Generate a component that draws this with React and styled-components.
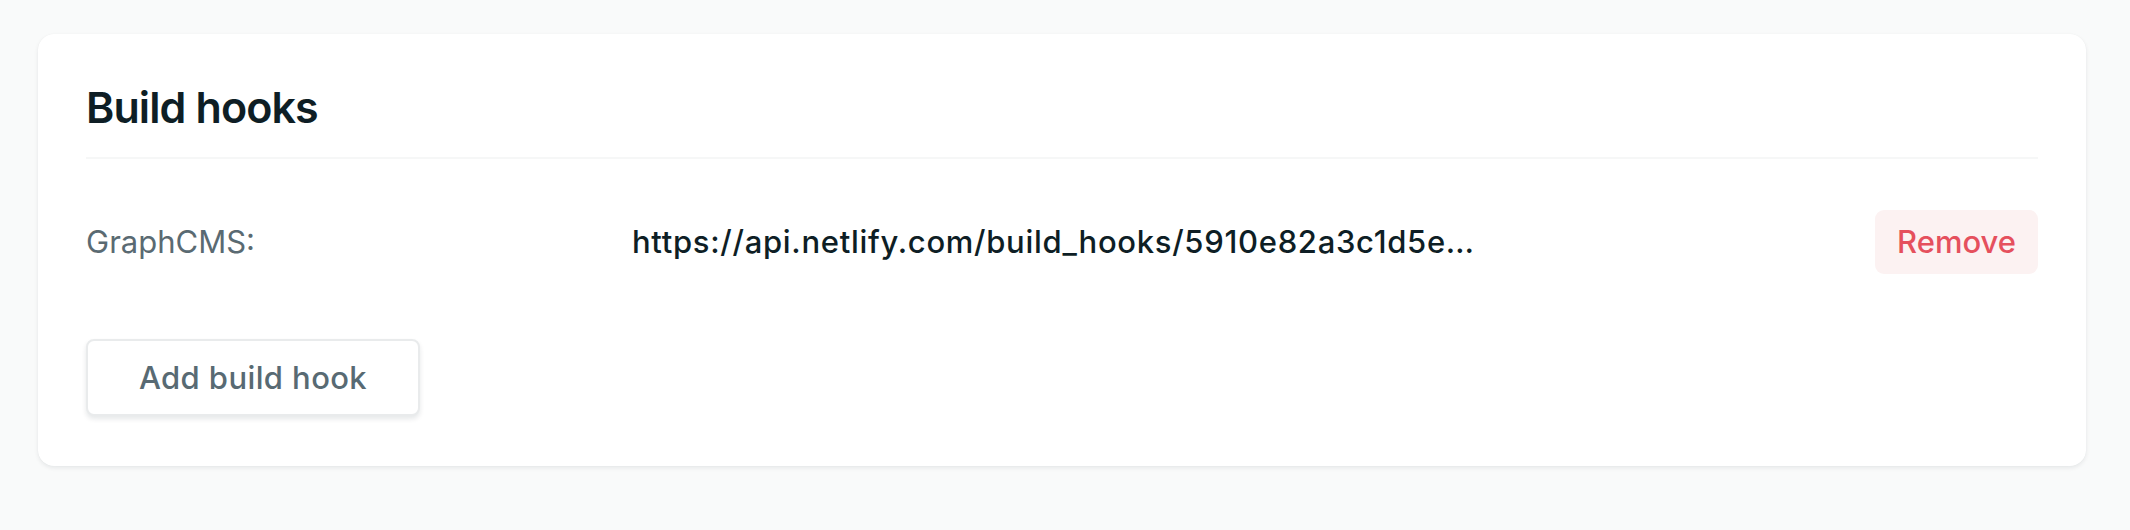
import React from "react";
import styled, { createGlobalStyle } from "styled-components";

const GlobalStyle = createGlobalStyle`
  html, body {
    margin: 0;
    padding: 0;
    background: #f9fafa;
    font-family: Inter, "Noto Sans", "Liberation Sans", sans-serif;
    -webkit-font-smoothing: antialiased;
  }
  * { box-sizing: border-box; }
`;

const Page = styled.div`
  padding: 34px 44px 64px 38px;
`;

const Card = styled.section`
  background: #ffffff;
  border-radius: 16px;
  box-shadow: 0 2px 4px rgba(14, 30, 37, 0.08), 0 0 1px rgba(14, 30, 37, 0.06);
  padding: 48px 48px 50px;
  min-height: 432px;
`;

const Header = styled.header`
  padding-bottom: 23px;
  border-bottom: 2px solid #f6f7f7;
`;

const Title = styled.h2`
  margin: 0;
  font-size: 43px;
  line-height: 1.2;
  font-weight: 600;
  color: #0e1e25;
  letter-spacing: -0.9px;
`;

const HookRow = styled.div`
  display: grid;
  grid-template-columns: 546px minmax(0, ${(p) => p.$urlWidth}px) 1fr auto;
  align-items: center;
  margin-top: 51px;
`;

const Label = styled.span`
  font-size: 31px;
  line-height: 1.2;
  color: #5a6a72;
  font-weight: 400;
`;

const Url = styled.span`
  font-size: 31px;
  line-height: 1.2;
  color: #0e1e25;
  font-weight: 500;
  letter-spacing: 0.7px;
  white-space: nowrap;
`;

const RemoveButton = styled.button`
  grid-column: 4;
  justify-self: end;
  height: 64px;
  padding: 0 22px;
  border: none;
  border-radius: 9px;
  background: #fcf2f2;
  color: #e5505d;
  font-family: inherit;
  font-size: 31px;
  font-weight: 500;
  cursor: pointer;
`;

const AddButton = styled.button`
  margin-top: 65px;
  height: 77px;
  padding: 0 40px;
  width: 334px;
  background: #ffffff;
  border: 2px solid #e9ebec;
  border-radius: 8px;
  box-shadow: 0 3px 5px rgba(14, 30, 37, 0.1);
  color: #586a73;
  font-family: inherit;
  font-size: 31px;
  font-weight: 500;
  letter-spacing: 0.4px;
  cursor: pointer;
`;

const hooks = [
  {
    name: "GraphCMS:",
    url: "https://api.netlify.com/build_hooks/5910e82a3c1d5e0e5f27c1a4",
  },
];

const truncate = (s, n) => (s.length > n ? s.slice(0, n) + "…" : s);

export default function App() {
  return (
    <>
      <GlobalStyle />
      <Page>
        <Card>
          <Header>
            <Title>Build hooks</Title>
          </Header>
          {hooks.map((h) => (
            <HookRow key={h.name} $urlWidth={840}>
              <Label>{h.name}</Label>
              <Url title={h.url}>{truncate(h.url, 50)}</Url>
              <RemoveButton>Remove</RemoveButton>
            </HookRow>
          ))}
          <AddButton>Add build hook</AddButton>
        </Card>
      </Page>
    </>
  );
}
